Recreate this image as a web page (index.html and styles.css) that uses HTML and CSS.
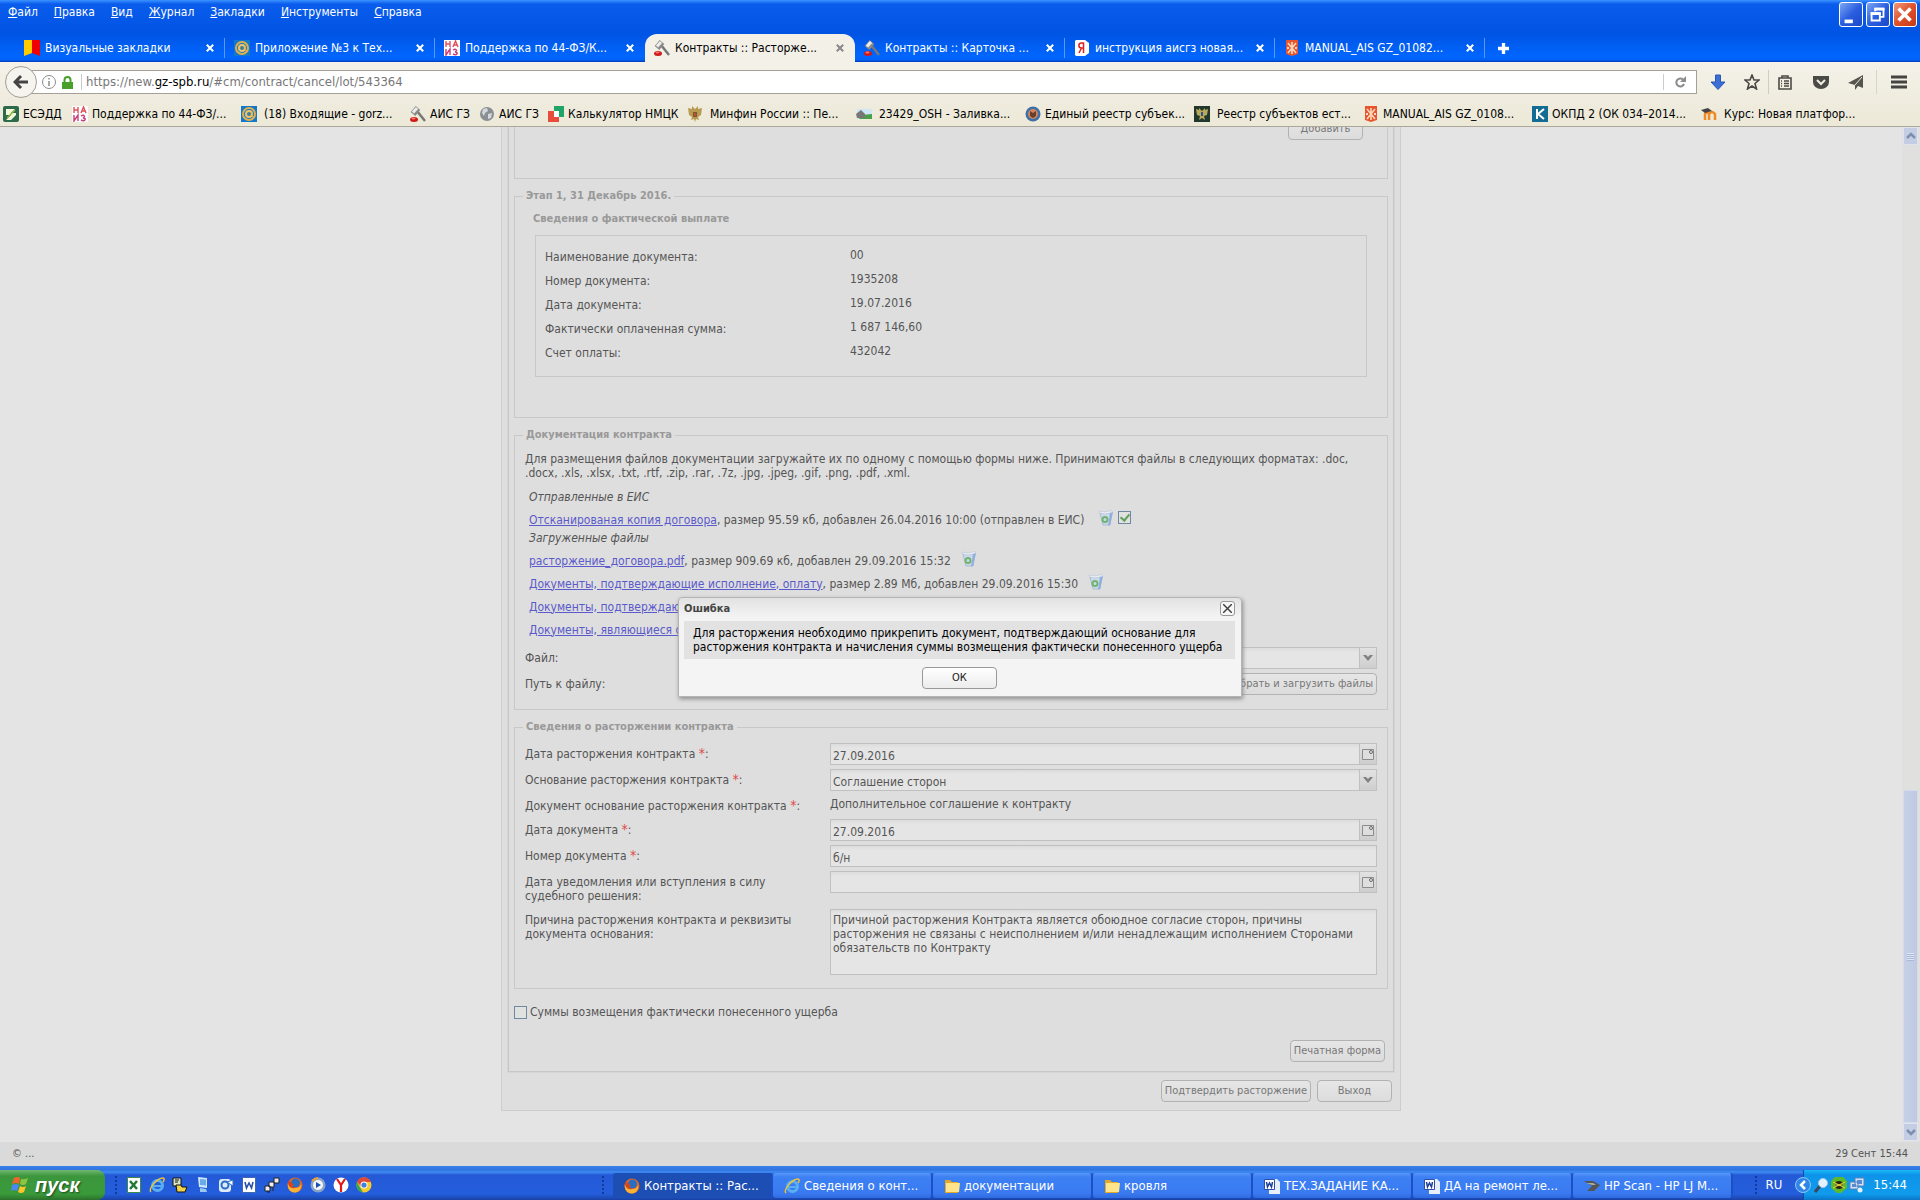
FILE: index.html
```
<!DOCTYPE html>
<html lang="ru">

<head>
    <title>Контракты :: Расторжение контракта</title>
    <meta charset="utf-8">
    <meta name="viewport" content="width=device-width, initial-scale=1.0">
    <link rel="stylesheet" href="styles.css">
</head>

<body>

    <!-- shared icons -->
    <svg class="sprite" width="0" height="0">
        <symbol id="i-flag" viewBox="0 0 16 16"><path fill="#ffcc00" d="M0 0h8v13l-8 3z"/><path fill="#f00000" d="M8 0h8v16l-8-3z"/></symbol>
        <symbol id="i-mail" viewBox="0 0 16 16"><path fill="#1478c8" d="M0 0h16v16H0z"/><circle cx="8" cy="8" r="6" fill="none" stroke="#e0b050" stroke-width="2"/><circle cx="8" cy="8" r="3" fill="#3b7fa0" stroke="#f0c468" stroke-width="2"/><path d="M11 6v4l2 1" stroke="#e0b050" fill="none"/></symbol>
        <symbol id="i-nais" viewBox="0 0 16 16"><path fill="#fff" d="M0 0h16v16H0z"/><g fill="none" stroke="#e0505a" stroke-width="1.4"><path d="M2 1v6M6 1v6M2 4h4M9 7l2.500-6L14 7M10 5h3"/><path stroke="#c83c78" d="M2 9v6l4-6v6M9 10c3-2 5 1 2 2 4 0 2 4-2 2"/></g></symbol>
        <symbol id="i-gavel" viewBox="0 0 16 16"><path stroke="#777" stroke-width="2.500" d="M7 5l8 10"/><path stroke="#8a8a8a" stroke-width="6" d="M3 8l5-6"/><path stroke="#ececec" stroke-width="3" d="M3 6.500L7 2"/><ellipse cx="4" cy="13.500" rx="4" ry="2.500" fill="#d01818"/><ellipse cx="3.500" cy="12.500" rx="2" ry="1" fill="#f47a6a"/></symbol>
        <symbol id="i-ya" viewBox="0 0 16 16"><path fill="#fff" d="M2 0h9l4 3v10l-4 3H2L1 15V1z"/><path fill="none" stroke="#e02020" stroke-width="1.500" d="M9.500 13V3H7.500C4 3 4 8 7.500 8h2M7.500 8L5 13"/></symbol>
        <symbol id="i-gz" viewBox="0 0 16 16"><path fill="#e8542e" d="M2 0h12v14l-6 2-6-2z"/><path stroke="#fbd9b8" stroke-width="1.600" d="M4 3l8 10M12 3L4 13M8 2v12"/><circle cx="4" cy="8" r="1" fill="#fff"/><circle cx="12" cy="8" r="1" fill="#fff"/></symbol>
        <symbol id="i-esedd" viewBox="0 0 16 16"><rect width="16" height="16" rx="2" fill="#2d6a4c"/><path fill="#f3f6d8" d="M3 3h9l-4 4h5v2l-5 5H3l5-5H3z"/><path stroke="#89b53c" fill="none" stroke-width="1.500" d="M4 12l8-8"/></symbol>
        <symbol id="i-globe" viewBox="0 0 16 16"><circle cx="8" cy="8" r="7" fill="#8a8f94"/><path fill="#d6d9dc" d="M4 3l4-1 1 3-3 2-1 3-2-3zM9 8l4-1-1 5-3 1z"/></symbol>
        <symbol id="i-calc" viewBox="0 0 16 16"><path fill="#1fa567" d="M6 0h10v11H6z"/><path fill="#e74c3c" d="M0 5h6v6h5v5H0z"/><path fill="#fff" d="M6 5h5v6H6z"/></symbol>
        <symbol id="i-eagle" viewBox="0 0 16 16"><path fill="#b89a50" d="M8 3L5 0v3L1 2l1 7 3 2-1 3 3-1 1 3 1-3 3 1-1-3 3-2 1-7-4 1V0z"/><path fill="#7a5a2c" d="M3 4l2 4M13 4l-2 4M6 6h4v5H6z"/><path fill="#c44a3a" d="M7 7h2v3H7z"/></symbol>
        <symbol id="i-house" viewBox="0 0 16 16"><path fill="#cfe6f7" d="M1 3h15v10H1z"/><path fill="#4aa04a" d="M5 9l11-1v5H3z"/><path fill="#777" d="M0 8l5-4 4 4v4H1z"/></symbol>
        <symbol id="i-round" viewBox="0 0 16 16"><circle cx="8" cy="8" r="7.500" fill="#3f6faa"/><circle cx="8" cy="8" r="5" fill="#d0855a"/><path fill="#6a3d2c" d="M5 5l3 2 3-2v5l-3 2-3-2z"/></symbol>
        <symbol id="i-reestr" viewBox="0 0 16 16"><path fill="#23382c" d="M0 0h16v16H0z"/><path fill="#b8a85a" d="M8 5L5 2v2L2 3l1 6 3 1-1 4 3-2 3 2-1-4 3-1 1-6-3 1V2z"/><path fill="#33548a" d="M7 6h2v4H7z"/></symbol>
        <symbol id="i-k" viewBox="0 0 16 16"><path fill="#136c94" d="M0 0h16v16H0z"/><path fill="none" stroke="#fff" stroke-width="2" d="M5 3v10M12 3L6 8l6 5"/></symbol>
        <symbol id="i-moodle" viewBox="0 0 16 16"><path fill="none" stroke="#f08a24" stroke-width="2.500" d="M4 14V8q2-3 4 0v6M8 8q3-4 6 0v6"/><path fill="#444" d="M0 4l7-2 4 3-7 2z"/></symbol>
        <symbol id="i-trash" viewBox="0 0 16 16"><path fill="#cdd9ea" stroke="#a9bbd4" d="M2 3h12l-2 12H5z"/><path fill="#8fb0dc" d="M12 3l3-1-3 13-2 .5z"/><path fill="#eef2f8" stroke="#b4c2d6" stroke-width=".6" d="M1 1l6 1 7-1.500v2L7 4 2 3z"/><circle cx="7" cy="9.500" r="2.500" fill="none" stroke="#6fb46f" stroke-width="2"/></symbol>
        <symbol id="i-cal" viewBox="0 0 12 12"><path fill="#dedede" stroke="#8c8c8c" d="M.5 1.500h11v10H.5z"/><circle cx="9" cy="4" r="1.500" fill="#ececec" stroke="#666"/></symbol>
        <symbol id="i-down" viewBox="0 0 10 6"><path fill="#808080" d="M0 0h3l2 2 2-2h3L5 6z"/></symbol>
        <symbol id="i-ff" viewBox="0 0 16 16"><circle cx="8" cy="8" r="7.500" fill="#e8651a"/><circle cx="8.500" cy="6" r="4.500" fill="#2a6ec4"/><path fill="#f9b233" d="M1 5c0 5 3 6 7 6 3 0 5-1 6-4 1 6-3 8.500-6.500 8.500C2 15.500 0 10 1 5z"/><path fill="#d8431a" d="M1 4l3 1 3 3-2 1 3 2c-4 1-7-2-7-7z"/></symbol>
        <symbol id="i-ie" viewBox="0 0 16 16"><circle cx="8.500" cy="8.500" r="5" fill="none" stroke="#58b0f2" stroke-width="3"/><path stroke="#58b0f2" stroke-width="2" d="M5 9h8"/><path fill="none" stroke="#f4c430" stroke-width="1.400" d="M2 15C-1 12 8 1 14 1c2 0 1 3 0 4"/></symbol>
        <symbol id="i-word" viewBox="0 0 16 16"><path fill="#fff" stroke="#4066b0" d="M1.500.5h13v15h-13z"/><path fill="none" stroke="#2a4fa8" stroke-width="1.600" d="M4 5l1.500 6L8 6l2.500 5L12 5"/></symbol>
        <symbol id="i-doc" viewBox="0 0 16 16"><path fill="#e6eefc" d="M5 1h8l3 3v12H5z"/><path fill="#fff" stroke="#2a4fa8" d="M.5 1.500h10v10H.5z"/><path fill="none" stroke="#1c3f98" stroke-width="1.500" d="M2.500 4l1 5 2-4 2 4 1-5"/></symbol>
        <symbol id="i-folder" viewBox="0 0 16 16"><path fill="#e2a928" d="M1 2h5l2 2h6v11H1z"/><path fill="#ffe48a" d="M2 5h14l-1 9H2z"/></symbol>
        <symbol id="i-excel" viewBox="0 0 16 16"><path fill="#fff" stroke="#3b8b4a" d="M1.500.5h13v15h-13z"/><path stroke="#1f7a35" stroke-width="2.500" d="M4 4l7 8M11 4l-7 8"/></symbol>
        <symbol id="i-pcs" viewBox="0 0 16 16"><path fill="#d8e6c0" stroke="#111" d="M1 1h8v8H1z"/><path fill="#f2d24a" stroke="#111" d="M4 8h5l1 2h5l-2 5H5z"/><path stroke="#111" d="M3 3h4M3 5h3"/></symbol>
        <symbol id="i-desk" viewBox="0 0 16 16"><path fill="#cfe7fb" d="M3 0l9 1v10l-8-1z"/><path fill="#6aaae8" d="M5 2l6 .5v6L5 8z"/><path fill="#9cc8f0" d="M5 11l6 1 1 3H5z"/></symbol>
        <symbol id="i-outl" viewBox="0 0 16 16"><rect x="1" y="2" width="12" height="13" rx="3" fill="#dceafa"/><circle cx="7" cy="8" r="3.500" fill="none" stroke="#2a70c8" stroke-width="2"/><path fill="#fff" stroke="#2a70c8" d="M9 5l6-2v6z"/></symbol>
        <symbol id="i-net" viewBox="0 0 16 16"><path fill="#eee" stroke="#222" d="M1 9h5v5H1zM5 5h5v5H5zM10 1h5v5h-5z"/><path stroke="#222" d="M3 15h3M9 11v3"/></symbol>
        <symbol id="i-play" viewBox="0 0 16 16"><circle cx="8" cy="8" r="7.500" fill="#8aa4c8"/><circle cx="8" cy="8" r="5" fill="#f4f6fa"/><path fill="#1a50b0" d="M6 5l5 3-5 3z"/><path fill="none" stroke="#f0a030" stroke-width="2" d="M2 4q3-3 6-3"/></symbol>
        <symbol id="i-yb" viewBox="0 0 16 16"><circle cx="8" cy="8" r="7.500" fill="#fff"/><path stroke="#e01818" stroke-width="2.200" fill="none" d="M4 2l4 6 4-6M8 8v7"/></symbol>
        <symbol id="i-chrome" viewBox="0 0 16 16"><circle cx="8" cy="8" r="7.500" fill="#f7ca2e"/><path fill="#e04a36" d="M1 5a7.500 7.500 0 0 1 14 0H8L5 9z"/><path fill="#3fa452" d="M1 5l4 7 2 3.500A7.500 7.500 0 0 1 1 5z"/><circle cx="8" cy="8" r="3.500" fill="#fff"/><circle cx="8" cy="8" r="2.600" fill="#3f7fe0"/></symbol>
        <symbol id="i-scan" viewBox="0 0 16 16"><path fill="#555" d="M0 3h9l7 4-6 6H3l5-5z"/><path fill="#a8b0a8" d="M2 5h7l3 2H8z"/></symbol>
        <symbol id="i-x" viewBox="0 0 10 10"><path stroke="currentColor" stroke-width="2.500" d="M1 1l8 8M9 1L1 9"/></symbol>
    </svg>

    <header class="chrome">
        <div class="titlebar">
            <nav class="menu">
                <a href="#"><u>Ф</u>айл</a>
                <a href="#"><u>П</u>равка</a>
                <a href="#"><u>В</u>ид</a>
                <a href="#"><u>Ж</u>урнал</a>
                <a href="#"><u>З</u>акладки</a>
                <a href="#"><u>И</u>нструменты</a>
                <a href="#"><u>С</u>правка</a>
            </nav>
            <div class="winbtns">
                <button aria-label="Свернуть"><svg viewBox="0 0 24 25"><path fill="#fff" d="M5 18h9v4H5z"/></svg></button>
                <button aria-label="Восстановить"><svg viewBox="0 0 24 25"><path fill="none" stroke="#fff" stroke-width="2" d="M9 9V6h9v9h-3M5 11h9v8H5z"/><path fill="#fff" d="M8 5h11v3H8zM4 10h11v3H4z"/></svg></button>
                <button class="close" aria-label="Закрыть"><svg viewBox="0 0 24 25"><path stroke="#fff" stroke-width="4" d="M5 6l13 13M18 6L5 19"/></svg></button>
            </div>
        </div>

        <div class="tabs">
            <div class="tab"><svg><use href="#i-flag"/></svg><span>Визуальные закладки</span><button aria-label="Закрыть вкладку"><svg><use href="#i-x"/></svg></button></div>
            <div class="tab"><svg><use href="#i-mail"/></svg><span>Приложение №3 к Тех...</span><button aria-label="Закрыть вкладку"><svg><use href="#i-x"/></svg></button></div>
            <div class="tab nosep"><svg><use href="#i-nais"/></svg><span>Поддержка по 44-ФЗ/К...</span><button aria-label="Закрыть вкладку"><svg><use href="#i-x"/></svg></button></div>
            <div class="tab active"><svg><use href="#i-gavel"/></svg><span>Контракты :: Расторже...</span><button aria-label="Закрыть вкладку"><svg><use href="#i-x"/></svg></button></div>
            <div class="tab"><svg><use href="#i-gavel"/></svg><span>Контракты :: Карточка ...</span><button aria-label="Закрыть вкладку"><svg><use href="#i-x"/></svg></button></div>
            <div class="tab"><svg><use href="#i-ya"/></svg><span>инструкция аисгз новая...</span><button aria-label="Закрыть вкладку"><svg><use href="#i-x"/></svg></button></div>
            <div class="tab"><svg><use href="#i-gz"/></svg><span>MANUAL_AIS GZ_01082...</span><button aria-label="Закрыть вкладку"><svg><use href="#i-x"/></svg></button></div>
            <button class="newtab" aria-label="Новая вкладка"><svg viewBox="0 0 10 10"><path stroke="#fff" stroke-width="3" d="M5 0v10M0 5h10"/></svg></button>
        </div>

        <div class="navbar">
            <button class="back" aria-label="Назад"><svg viewBox="0 0 16 16"><path fill="none" stroke="#444" stroke-width="3" d="M8 2L2 8l6 6M2 8h13"/></svg></button>
            <div class="urlbar">
                <svg class="info" viewBox="0 0 14 14"><circle cx="7" cy="7" r="6.500" fill="none" stroke="#8a8a8a"/><path stroke="#8a8a8a" stroke-width="1.500" d="M7 6v5M7 3v1.500"/></svg>
                <svg class="lock" viewBox="0 0 11 13"><path fill="#47a029" d="M0 6h11v7H0z"/><path fill="none" stroke="#47a029" stroke-width="2" d="M2.500 6V4a3 3 0 0 1 6 0v2"/></svg>
                <p>https://new.<b>gz-spb.ru</b>/#cm/contract/cancel/lot/543364</p>
                <button aria-label="Обновить"><svg viewBox="0 0 12 12"><path fill="none" stroke="#8c8c8c" stroke-width="2" d="M9 3.500A4 4 0 1 0 10 8"/><path fill="#8c8c8c" d="M12 0v6H6z"/></svg></button>
            </div>
            <div class="tools">
                <button aria-label="Загрузки"><svg viewBox="0 0 16 16"><path fill="#3a6fd8" stroke="#2a56b4" d="M5.500 1h5v7H15l-7 7.500L1 8h4.500z"/></svg></button>
                <button class="star" aria-label="Закладка"><svg viewBox="0 0 16 16"><path fill="none" stroke="#4b4b45" stroke-width="1.600" d="M8 1l2 5h5l-4 3.500 1.500 5.500L8 12l-4.500 3L5 9.500 1 6h5z"/></svg></button>
                <button class="list" aria-label="Список"><svg viewBox="0 0 16 16"><path fill="none" stroke="#4b4b45" stroke-width="1.600" d="M2 4h12v11H2zM5 4V2h6v2M4 7h1M7 7h5M4 9.500h1M7 9.500h5M4 12h1M7 12h5"/></svg></button>
                <button class="pocket" aria-label="Pocket"><svg viewBox="0 0 16 16"><path fill="#4b4b45" d="M0 2h16v6a8 7 0 0 1-16 0z"/><path fill="none" stroke="#f0eee2" stroke-width="2" d="M4 6l4 4 4-4"/></svg></button>
                <button class="send" aria-label="Отправить"><svg viewBox="0 0 16 16"><path fill="#55554e" d="M15 1v13l-5-2-3 4v-5L0 9z"/><path stroke="#f0eee2" d="M14 3L7 11"/></svg></button>
                <button class="burger" aria-label="Меню"><svg viewBox="0 0 16 16"><path stroke="#444440" stroke-width="3" d="M0 3h16M0 8h16M0 13h16"/></svg></button>
            </div>
        </div>

        <nav class="bookmarks">
            <a class="short" href="#"><svg><use href="#i-esedd"/></svg>ЕСЭДД</a>
            <a href="#"><svg><use href="#i-nais"/></svg>Поддержка по 44-ФЗ/...</a>
            <a class="wide" href="#"><svg><use href="#i-mail"/></svg>(18) Входящие - gorz...</a>
            <a class="short" href="#"><svg><use href="#i-gavel"/></svg>АИС ГЗ</a>
            <a class="short" href="#"><svg><use href="#i-globe"/></svg>АИС ГЗ</a>
            <a class="medium" href="#"><svg><use href="#i-calc"/></svg>Калькулятор НМЦК</a>
            <a class="wide" href="#"><svg><use href="#i-eagle"/></svg>Минфин России :: Пе...</a>
            <a class="wide" href="#"><svg><use href="#i-house"/></svg>23429_OSH - Заливка...</a>
            <a href="#"><svg><use href="#i-round"/></svg>Единый реестр субъек...</a>
            <a class="wide" href="#"><svg><use href="#i-reestr"/></svg>Реестр субъектов ест...</a>
            <a href="#"><svg><use href="#i-gz"/></svg>MANUAL_AIS GZ_0108...</a>
            <a href="#"><svg><use href="#i-k"/></svg>ОКПД 2 (ОК 034–2014...</a>
            <a class="wide" href="#"><svg><use href="#i-moodle"/></svg>Курс: Новая платфор...</a>
        </nav>
    </header>

    <main class="page">
        <div class="scrollarea">
            <div class="content">
                <form class="window">
                    <div class="inner">
                        <fieldset class="cut">
                            <button type="button" class="btn">Добавить</button>
                        </fieldset>

                        <fieldset class="stage">
                            <legend>Этап 1, 31 Декабрь 2016.</legend>
                            <h3>Сведения о фактической выплате</h3>
                            <dl>
                                <dt>Наименование документа:</dt>
                                <dd>00</dd>
                                <dt>Номер документа:</dt>
                                <dd>1935208</dd>
                                <dt>Дата документа:</dt>
                                <dd>19.07.2016</dd>
                                <dt>Фактически оплаченная сумма:</dt>
                                <dd>1 687 146,60</dd>
                                <dt>Счет оплаты:</dt>
                                <dd>432042</dd>
                            </dl>
                        </fieldset>

                        <fieldset class="docs">
                            <legend>Документация контракта</legend>
                            <p class="hint">Для размещения файлов документации загружайте их по одному с помощью формы ниже. Принимаются файлы в следующих форматах: .doc, .docx, .xls, .xlsx, .txt, .rtf, .zip, .rar, .7z, .jpg, .jpeg, .gif, .png, .pdf, .xml.</p>
                            <div class="files">
                                <h4>Отправленные в ЕИС</h4>
                                <div class="file"><a href="#">Отсканированая копия договора</a>, размер 95.59 кб, добавлен 26.04.2016 10:00 (отправлен в ЕИС)&nbsp;<button type="button" aria-label="Удалить"><svg><use href="#i-trash"/></svg></button><input type="checkbox" aria-label="Отправлен" checked></div>
                                <h4>Загруженные файлы</h4>
                                <div class="file"><a href="#">расторжение_договора.pdf</a>, размер 909.69 кб, добавлен 29.09.2016 15:32<button type="button" aria-label="Удалить"><svg><use href="#i-trash"/></svg></button></div>
                                <div class="file"><a href="#">Документы, подтверждающие исполнение, оплату</a>, размер 2.89 Мб, добавлен 29.09.2016 15:30<button type="button" aria-label="Удалить"><svg><use href="#i-trash"/></svg></button></div>
                                <div class="file"><a href="#">Документы, подтверждающие</a></div>
                                <div class="file"><a href="#">Документы, являющиеся о</a></div>
                            </div>
                            <div class="rows">
                                <label for="file">Файл:</label>
                                <div class="field"><select id="file"><option></option></select><span class="trigger"><svg class="arrow"><use href="#i-down"/></svg></span></div>
                                <label for="upload">Путь к файлу:</label>
                                <button type="button" class="btn right" id="upload">Выбрать и загрузить файлы</button>
                            </div>
                        </fieldset>

                        <fieldset>
                            <legend>Сведения о расторжении контракта</legend>
                            <div class="rows cancel">
                                <label for="d1">Дата расторжения контракта <i>*</i>:</label>
                                <div class="field"><input id="d1" type="text" value="27.09.2016"><button type="button" class="trigger" aria-label="Календарь"><svg><use href="#i-cal"/></svg></button></div>
                                <label for="reason">Основание расторжения контракта <i>*</i>:</label>
                                <div class="field"><select id="reason"><option>Соглашение сторон</option></select><span class="trigger"><svg class="arrow"><use href="#i-down"/></svg></span></div>
                                <span class="label">Документ основание расторжения контракта <i>*</i>:</span>
                                <p>Дополнительное соглашение к контракту</p>
                                <label for="d2">Дата документа <i>*</i>:</label>
                                <div class="field"><input id="d2" type="text" value="27.09.2016"><button type="button" class="trigger" aria-label="Календарь"><svg><use href="#i-cal"/></svg></button></div>
                                <label for="num">Номер документа <i>*</i>:</label>
                                <div class="field"><input id="num" type="text" value="б/н"></div>
                                <label class="two" for="d3">Дата уведомления или вступления в силу судебного решения:</label>
                                <div class="field"><input id="d3" type="text"><button type="button" class="trigger" aria-label="Календарь"><svg><use href="#i-cal"/></svg></button></div>
                                <label for="why">Причина расторжения контракта и реквизиты документа основания:</label>
                                <textarea id="why">Причиной расторжения Контракта является обоюдное согласие сторон, причины расторжения не связаны с неисполнением и/или ненадлежащим исполнением Сторонами обязательств по Контракту</textarea>
                            </div>
                        </fieldset>

                        <label class="check"><input type="checkbox">Суммы возмещения фактически понесенного ущерба</label>
                        <div class="print">
                            <button type="button" class="btn">Печатная форма</button>
                        </div>
                    </div>
                    <div class="actions">
                        <button type="button" class="btn">Подтвердить расторжение</button>
                        <button type="button" class="btn">Выход</button>
                    </div>
                </form>
            </div>

            <div class="scrollbar">
                <button aria-label="Вверх"><svg viewBox="0 0 10 8"><path fill="none" stroke="#7d8eb0" stroke-width="2.500" d="M1 6l4-4 4 4"/></svg></button>
                <div class="track">
                    <div class="thumb"></div>
                </div>
                <button aria-label="Вниз"><svg viewBox="0 0 10 8"><path fill="none" stroke="#7d8eb0" stroke-width="2.500" d="M1 2l4 4 4-4"/></svg></button>
            </div>
        </div>

        <footer class="status">
            <span>© ...</span>
            <span>29 Сент 15:44</span>
        </footer>

        <div class="mask">
            <section class="dialog" role="dialog" aria-labelledby="dlg-title">
                <header>
                    <h2 id="dlg-title">Ошибка</h2>
                    <button aria-label="Закрыть"><svg viewBox="0 0 9 9"><path stroke="#444" stroke-width="1.500" d="M0 0l9 9M9 0L0 9"/></svg></button>
                </header>
                <p>Для расторжения необходимо прикрепить документ, подтверждающий основание для расторжения контракта и начисления суммы возмещения фактически понесенного ущерба</p>
                <button class="btn ok">ОК</button>
            </section>
        </div>
    </main>

    <footer class="taskbar">
        <button class="start"><svg viewBox="0 0 18 18"><path fill="#f2652a" d="M3 2q3-2 6 0L8 8Q5 6 1 8z"/><path fill="#8cc63f" d="M10 3q3 1 7-1l-2 6q-3 2-6 0z"/><path fill="#4a8af0" d="M1 9q4-2 7 0l-2 6q-3-2-6 0z"/><path fill="#fbc52c" d="M9 10q3 2 6 0l-2 6q-3 2-6 0z"/></svg>пуск</button>
        <span class="grip"></span>
        <div class="quick">
            <svg><use href="#i-excel"/></svg>
            <svg><use href="#i-ie"/></svg>
            <svg><use href="#i-pcs"/></svg>
            <svg><use href="#i-desk"/></svg>
            <svg><use href="#i-outl"/></svg>
            <svg><use href="#i-word"/></svg>
            <svg><use href="#i-net"/></svg>
            <svg><use href="#i-ff"/></svg>
            <svg><use href="#i-play"/></svg>
            <svg><use href="#i-yb"/></svg>
            <svg><use href="#i-chrome"/></svg>
        </div>
        <span class="grip"></span>
        <div class="tasks">
            <button class="pressed"><svg><use href="#i-ff"/></svg>Контракты :: Рас...</button>
            <button><svg><use href="#i-ie"/></svg>Сведения о конт...</button>
            <button><svg><use href="#i-folder"/></svg>документации</button>
            <button><svg><use href="#i-folder"/></svg>кровля</button>
            <button><svg><use href="#i-doc"/></svg>ТЕХ.ЗАДАНИЕ КА...</button>
            <button><svg><use href="#i-doc"/></svg>ДА на ремонт ле...</button>
            <button><svg><use href="#i-scan"/></svg>HP Scan - HP LJ M...</button>
        </div>
        <span class="grip"></span>
        <span class="lang">RU</span>
        <div class="tray">
            <button aria-label="Показать значки"><svg viewBox="0 0 16 16"><circle cx="8" cy="8" r="7.500" fill="#2f86e8" stroke="#8cc8fa"/><path fill="none" stroke="#fff" stroke-width="2.500" d="M10 4L6 8l4 4"/></svg></button>
            <svg viewBox="0 0 16 16"><path stroke="#3b4658" stroke-width="3" d="M2 15l5-6"/><circle cx="10" cy="6" r="4.500" fill="#e4f2ff" stroke="#a8c8e8"/></svg>
            <svg viewBox="0 0 16 16"><path fill="#5fb82a" d="M4 0h8l4 4v7l-6 5H6l-6-5V4z"/><circle cx="8" cy="8" r="4" fill="#2a2410"/><path stroke="#e8d840" d="M2 5l12 6M2 11l12-6M4 8h8"/></svg>
            <svg viewBox="0 0 16 16"><path fill="#cfe2f8" stroke="#5a82b8" d="M6 1h9v8H6zM1 5h8v7H1z"/><path fill="#5a8ad0" d="M8 3h5v4H8zM3 7h4v3H3z"/><circle cx="11" cy="13" r="2.500" fill="#e6f0fa"/></svg>
            <time>15:44</time>
        </div>
    </footer>

</body>

</html>
```
FILE: styles.css
```
* {
    box-sizing: border-box;
}

body {
    margin: 0;
    height: 100vh;
    display: flex;
    flex-direction: column;
    overflow: hidden;
    font: 12px/14px "DejaVu Sans Condensed", "DejaVu Sans", sans-serif;
    color: #555;
    background: #e4e4e4;
}

button,
input,
select,
textarea {
    font: inherit;
    color: inherit;
    margin: 0;
    padding: 0;
    border: 0;
    background: none;
}

svg {
    width: 16px;
    height: 16px;
    flex: none;
    display: block;
}

.sprite {
    position: absolute;
    width: 0;
    height: 0;
}

h2, h3, h4, p, dl, dd {
    margin: 0;
}

/* browser chrome */

.chrome {
    background: #ece9d8;
    border-bottom: 1px solid #aca899;
    color: #000;
}

.titlebar {
    height: 34px;
    display: flex;
    justify-content: space-between;
    background: linear-gradient(#3a93ff, #0a5cec 4px, #0054e3);
}

.menu {
    display: flex;
    gap: 16px;
    padding: 5px 8px;
}

.menu a {
    color: #fff;
    text-decoration: none;
}

.winbtns {
    display: flex;
    gap: 3px;
    padding: 2px 3px;
}

.winbtns button {
    width: 24px;
    height: 25px;
    border: 1px solid #fff;
    border-radius: 3px;
    background: linear-gradient(135deg, #7ea6f4, #2a5fe0 50%, #1a48c8);
}

.winbtns .close {
    background: linear-gradient(135deg, #f09a7a, #e0502c 50%, #c23a14);
}

.winbtns svg {
    width: 22px;
    height: 23px;
}

.tabs {
    height: 28px;
    display: flex;
    padding-left: 15px;
    background: linear-gradient(#0054e3, #0066ff 22px, #0062f4 26px, #0038b8);
    color: #fff;
}

.tab {
    width: 210px;
    display: flex;
    align-items: center;
    gap: 5px;
    padding: 0 11px 0 9px;
    background: linear-gradient(#5c98f4, #5c98f4) no-repeat right 4px / 1px 20px;
}

.tab span {
    flex: 1;
    white-space: nowrap;
}

.tab button svg {
    width: 8px;
    height: 8px;
}

.tab.nosep {
    background: none;
}

.tab.active {
    background: #f3f0e8;
    color: #000;
    border-radius: 12px 12px 0 0;
}

.tab.active button {
    color: #888;
}

.newtab {
    padding: 0 13px;
}

.newtab svg {
    width: 11px;
    height: 11px;
}

.navbar {
    height: 40px;
    display: flex;
    align-items: center;
    padding-left: 5px;
    background: linear-gradient(#f4f1e9, #efecde);
}

.back {
    width: 32px;
    height: 32px;
    border: 1px solid #a09e94;
    border-radius: 50%;
    background: #f6f4ee;
    display: flex;
    align-items: center;
    justify-content: center;
    position: relative;
}

.urlbar {
    flex: 1;
    height: 24px;
    margin-left: -8px;
    padding-left: 12px;
    display: flex;
    align-items: center;
    gap: 6px;
    border: 1px solid #a3a198;
    background: #fff;
    font-size: 13px;
    color: #777;
}

.urlbar .info {
    width: 14px;
    height: 14px;
}

.urlbar .lock {
    width: 11px;
    height: 13px;
}

.urlbar p {
    flex: 1;
    margin-left: 2px;
    padding-left: 4px;
    border-left: 1px solid #c8c8c8;
    line-height: 16px;
}

.urlbar b {
    font-weight: normal;
    color: #000;
}

.urlbar button {
    width: 33px;
    height: 16px;
    display: flex;
    align-items: center;
    justify-content: center;
    border-left: 1px solid #ccc;
}

.urlbar button svg {
    width: 12px;
    height: 12px;
}

.tools {
    display: flex;
    align-items: center;
    padding-left: 3px;
}

.tools button {
    width: 36px;
    height: 24px;
    display: flex;
    align-items: center;
    justify-content: center;
}

.tools .star {
    width: 33px;
    border-right: 1px solid #d0cdc0;
}

.tools .list {
    width: 32px;
}

.tools .pocket {
    width: 39px;
}

.tools .send {
    width: 37px;
    padding-right: 4px;
    border-right: 1px solid #d8d5c8;
}

.tools .burger {
    width: 43px;
}

.bookmarks {
    height: 24px;
    display: flex;
    align-items: center;
    padding-left: 3px;
    background: linear-gradient(#efecde, #ece9d8);
    overflow: hidden;
}

.bookmarks a {
    width: 169px;
    flex: none;
    display: flex;
    align-items: center;
    gap: 4px;
    white-space: nowrap;
    color: #000;
    text-decoration: none;
}

.bookmarks .short {
    width: 69px;
}

.bookmarks .medium {
    width: 139px;
}

.bookmarks .wide {
    gap: 7px;
}

/* page */

.page {
    flex: 1;
    min-height: 0;
    display: flex;
    flex-direction: column;
    position: relative;
}

.scrollarea {
    flex: 1;
    min-height: 0;
    display: flex;
}

.content {
    flex: 1;
    overflow: hidden;
}

.window {
    width: 900px;
    margin: -20px auto 0;
    border: 1px solid #cdcdcd;
    border-top: 0;
    background: #dedede;
}

.inner {
    margin: 0 6px;
    padding: 0 5px 9px;
    border: 1px solid #c6c6c6;
    border-top: 0;
    box-shadow: 0 0 0 1px #d6d6d6;
}

fieldset {
    min-width: 0;
    margin: 0 0 10px;
    padding: 0 10px 13px;
    border: 1px solid #c8c8c8;
}

legend {
    margin-left: -2px;
    padding: 0 3px;
    font-size: 11px;
    font-weight: bold;
    color: #999;
}

.cut {
    height: 72px;
    padding: 11px 24px 0;
    border-top: 0;
    text-align: right;
}

.btn {
    height: 22px;
    min-width: 75px;
    padding: 0 3px;
    border: 1px solid #b2b2b2;
    border-radius: 4px;
    background: linear-gradient(#e6e6e6, #dcdcdc);
    font-size: 11px;
    color: #777;
}

.stage {
    padding-bottom: 40px;
}

.stage h3 {
    margin: 9px 0 9px 8px;
    font-size: 11px;
    color: #999;
}

.stage dl {
    display: grid;
    grid-template-columns: 305px 1fr;
    margin: 0 10px;
    padding: 9px 9px 11px;
    border: 1px solid #c8c8c8;
    line-height: 24px;
}

.stage dd {
    line-height: 20px;
}

.docs {
    padding-bottom: 14px;
}

.hint {
    margin: 10px 0;
}

.files {
    padding-left: 4px;
}

.files h4 {
    margin-bottom: 4px;
    font-weight: normal;
    font-style: italic;
}

.file {
    height: 23px;
    display: flex;
    align-items: center;
    white-space: pre;
}

.file a {
    color: #5a5acb;
}

.file button {
    margin: 0 4px 4px 10px;
}

.file input {
    margin-bottom: 4px;
}

input[type="checkbox"] {
    appearance: none;
    width: 13px;
    height: 13px;
    border: 1px solid #7088a0;
    background: #dfe2df;
    position: relative;
}

input[type="checkbox"]:checked::after {
    content: "";
    position: absolute;
    left: 3px;
    top: 0;
    width: 4px;
    height: 7px;
    border: solid #5fa05f;
    border-width: 0 2px 2px 0;
    transform: rotate(40deg);
}

.rows {
    display: grid;
    grid-template-columns: 305px 1fr;
    gap: 4px 0;
    margin-top: 6px;
}

.rows.cancel {
    margin-top: 9px;
}

.rows label,
.rows .label {
    padding: 4px 10px 2px 0;
}

.rows .two {
    padding-right: 30px;
}

.rows i {
    font-style: normal;
    font-size: 14px;
    line-height: 12px;
    color: #e04848;
}

.rows p {
    padding-top: 2px;
}

.rows .right {
    justify-self: end;
}

.field {
    height: 22px;
    display: flex;
    border: 1px solid #c0c0c0;
    background: linear-gradient(#dcdcdc, #e5e5e5 4px);
}

.field input,
.field select {
    flex: 1;
    min-width: 0;
    appearance: none;
    padding: 3px 2px 0;
    outline: 0;
}

.trigger {
    width: 17px;
    display: flex;
    align-items: center;
    justify-content: center;
    border-left: 1px solid #c0c0c0;
    background: linear-gradient(#e2e2e2, #cecece);
}

.trigger svg {
    width: 12px;
    height: 12px;
}

.trigger .arrow {
    width: 10px;
    height: 6px;
}

textarea {
    height: 66px;
    padding: 3px 2px;
    border: 1px solid #c0c0c0;
    background: linear-gradient(#dcdcdc, #e5e5e5 4px);
    resize: none;
    overflow: hidden;
}

.check {
    display: flex;
    align-items: center;
    gap: 3px;
    height: 16px;
    margin: 15px 0 20px;
}

.print {
    display: flex;
    justify-content: flex-end;
    padding-right: 3px;
}

.actions {
    display: flex;
    justify-content: flex-end;
    gap: 6px;
    padding: 8px;
}

.scrollbar {
    width: 18px;
    display: flex;
    flex-direction: column;
    padding: 0 2px 1px 1px;
    background: #e0e0df;
}

.scrollbar button {
    height: 18px;
    display: flex;
    align-items: center;
    justify-content: center;
    border: 1px solid #dfe4ef;
    background: #c3cde3;
}

.scrollbar svg {
    width: 10px;
    height: 8px;
}

.track {
    flex: 1;
    display: flex;
    flex-direction: column;
    justify-content: flex-end;
}

.thumb {
    height: 34%;
    border: 1px solid #d5dcec;
    background: repeating-linear-gradient(#dfe6f5, #dfe6f5 1px, #aab8d8 1px, #aab8d8 2px) no-repeat center / 7px 8px, linear-gradient(90deg, #c6cfe5, #bfcae2);
}

.status {
    height: 24px;
    display: flex;
    align-items: center;
    justify-content: space-between;
    padding: 0 12px;
    background: #dadada;
    font-size: 11px;
}

/* message box */

.mask {
    position: absolute;
    inset: 0;
    display: flex;
    align-items: center;
    justify-content: center;
}

.dialog {
    width: 564px;
    padding: 3px 6px 7px 5px;
    border: 1px solid #b4b4b4;
    border-radius: 4px 4px 0 0;
    background: linear-gradient(#e2e2e2, #f4f4f4 20px);
    box-shadow: 1px 2px 4px #8c8c8c;
    color: #000;
    text-align: center;
}

.dialog header {
    display: flex;
    align-items: center;
    justify-content: space-between;
    height: 16px;
    margin-bottom: 4px;
}

.dialog h2 {
    font-size: 11px;
    color: #444;
}

.dialog header button {
    width: 15px;
    height: 15px;
    padding: 2px;
    border: 1px solid #999;
    border-radius: 3px;
    background: #f6f6f6;
}

.dialog header svg {
    width: 9px;
    height: 9px;
}

.dialog p {
    padding: 5px 9px;
    background: #e2e2e2;
    text-align: left;
}

.dialog .ok {
    margin-top: 8px;
    border-color: #999;
    background: linear-gradient(#fff, #ececec);
    color: #222;
}

/* taskbar */

.taskbar {
    height: 34px;
    display: flex;
    align-items: center;
    background: linear-gradient(#3a80ea, #2f74e0 4px, #3f8cf3 6px, #2459d6 9px, #245edc 28px, #1941a5);
    color: #fff;
    font-size: 13px;
}

.start {
    width: 105px;
    height: 30px;
    align-self: flex-end;
    display: flex;
    align-items: center;
    gap: 6px;
    padding-left: 11px;
    border-radius: 0 8px 8px 0;
    background: linear-gradient(#70b870, #3c963c 6px, #3a9a3a 24px, #2a702a);
    font: italic bold 20px "Liberation Sans", sans-serif;
    text-shadow: 1px 1px 2px #1c4a1c;
}

.start svg {
    width: 18px;
    height: 18px;
}

.grip {
    width: 4px;
    height: 20px;
    margin: 4px 8px 0 9px;
    background: radial-gradient(circle, #123a9c 1px, transparent 1px) 0 0 / 4px 4px;
}

.quick {
    flex: 0 0 466px;
    display: flex;
    gap: 7px;
    padding-top: 4px;
    overflow: hidden;
}

.tasks {
    flex: 1;
    display: flex;
    min-width: 0;
    padding-top: 5px;
}

.tasks button {
    width: 160px;
    height: 25px;
    display: flex;
    align-items: center;
    gap: 4px;
    padding-left: 11px;
    border-right: 2px solid #1c50c4;
    border-radius: 3px;
    background: linear-gradient(#5a98fa, #3c80f4 4px, #3a7af0 20px, #2f6ae0);
    white-space: nowrap;
}

.tasks .pressed {
    background: #1c4eb4;
}

.lang {
    margin: 4px 21px 0 0;
}

.tray {
    height: 30px;
    align-self: flex-end;
    display: flex;
    align-items: center;
    gap: 2px;
    padding-right: 13px;
    border-left: 1px solid #0a4fa8;
    background: linear-gradient(#19b9f3, #0d94ea 5px, #109bec 24px, #0a76c8);
}

.tray button {
    margin-left: -9px;
}

.tray time {
    margin-left: 6px;
}
```
